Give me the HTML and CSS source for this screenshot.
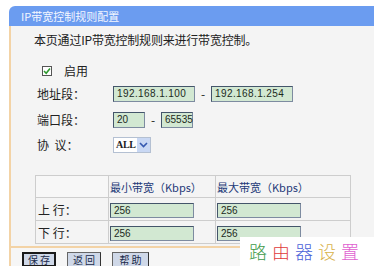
FILE: index.html
```html
<!DOCTYPE html>
<html lang="zh-CN">
<head>
	<meta charset="UTF-8">
	<title>IP带宽控制规则配置</title>
	<link rel="stylesheet" href="styles.css">
</head>
<body>
	<div class="panel">
		<div class="title">IP带宽控制规则配置</div>
		<div class="content">
			<p class="intro">本页通过IP带宽控制规则来进行带宽控制。</p>
			<div class="check-row">
				<span class="checkbox">
					<svg width="8" height="8" viewBox="0 0 8 8"><path d="M1 4 L3.2 6.2 L7 1.5" fill="none" stroke="#2f9a2f" stroke-width="1.6"/></svg>
				</span>
				<span class="check-label">启用</span>
			</div>
			<div class="row row-addr">
				<span class="label">地址段：</span>
				<span class="field ip">192.168.1.100</span>
				<span class="dash">-</span>
				<span class="field ip">192.168.1.254</span>
			</div>
			<div class="row row-port">
				<span class="label">端口段：</span>
				<span class="field port">20</span>
				<span class="dash">-</span>
				<span class="field port">65535</span>
			</div>
			<div class="row row-proto">
				<span class="label">协&nbsp; 议：</span>
				<span class="select">
					<span class="select-text">ALL</span>
					<span class="select-btn">
						<svg width="9" height="6" viewBox="0 0 9 6"><path d="M1 1 L4.5 4.5 L8 1" fill="none" stroke="#3559b0" stroke-width="1.6"/></svg>
					</span>
				</span>
			</div>
			<table class="bw">
				<tr class="head">
					<td class="c1"></td>
					<td class="c2">最小带宽（Kbps）</td>
					<td class="c3">最大带宽（Kbps）</td>
				</tr>
				<tr>
					<td class="c1">上 行：</td>
					<td class="c2"><span class="field bw-in">256</span></td>
					<td class="c3"><span class="field bw-in">256</span></td>
				</tr>
				<tr>
					<td class="c1">下 行：</td>
					<td class="c2"><span class="field bw-in">256</span></td>
					<td class="c3"><span class="field bw-in">256</span></td>
				</tr>
			</table>
		</div>
		<div class="footer">
			<span class="btn btn-default">保 存</span>
			<span class="btn">返 回</span>
			<span class="btn btn-help">帮 助</span>
		</div>
	</div>
	<div class="mark">
		<span class="m1">路</span><span class="m2">由</span><span class="m3">器</span><span class="m4">设</span><span class="m5">置</span>
	</div>
</body>
</html>
```

FILE: styles.css
```css
*{
	margin: 0;
	padding: 0;
	box-sizing: border-box;
}
body{
	background: #fff;
	font-family: "Noto Sans CJK SC", "Liberation Sans", sans-serif;
	font-size: 12px;
	color: #222;
	overflow: hidden;
	position: relative;
	height: 266px;
}
.panel{
	margin: 6px 0 0 9px;
}
.title{
	height: 20px;
	line-height: 20px;
	background: #6b9cf0;
	border-radius: 6px 0 0 0;
	color: #f4f7ff;
	font-size: 11px;
	padding-left: 12px;
}
.content{
	background: #f4f4f4;
	border-left: 2px solid #f3d3a6;
	border-bottom: 2px solid #f3d3a6;
	padding: 6px 0 2px 23px;
}
.intro{
	line-height: 16px;
	font-size: 12px;
	letter-spacing: -0.2px;
}
.check-row{
	display: flex;
	align-items: center;
	height: 17px;
	margin: 14px 0 0 8px;
}
.checkbox{
	width: 10px;
	height: 10px;
	border: 1px solid #555;
	background: #fff;
	display: flex;
	align-items: center;
	justify-content: center;
}
.check-label{
	margin-left: 12px;
}
.row{
	display: flex;
	align-items: center;
	height: 17px;
	padding-left: 3px;
}
.row-addr{ margin-top: 6px; }
.row-port{ margin-top: 9px; }
.row-proto{ margin-top: 8px; }
.label{
	width: 76px;
}
.field{
	display: inline-block;
	height: 16px;
	line-height: 14px;
	background: #d2e8d2;
	border: 1px solid #44556a;
	border-right-color: #7d8ba0;
	border-bottom-color: #7d8ba0;
	font-family: "Liberation Sans", sans-serif;
	font-size: 10px;
	color: #1c2a1c;
	padding-left: 3px;
}
.ip{
	width: 82px;
	letter-spacing: 0.4px;
}
.port{
	width: 32px;
}
.dash{
	width: 16px;
	text-align: center;
}
.select{
	display: flex;
	align-items: center;
	height: 16px;
	width: 38px;
	border: 1px solid #b4c0d2;
	background: #fff;
}
.select-text{
	font-family: "Liberation Serif", serif;
	font-weight: bold;
	font-size: 10px;
	letter-spacing: -0.3px;
	padding-left: 2px;
	width: 23px;
	overflow: hidden;
}
.select-btn{
	width: 13px;
	height: 14px;
	background: #c9d8f4;
	display: flex;
	align-items: center;
	justify-content: center;
}
.bw{
	margin: 22px 0 0 1px;
	width: 316px;
	border-collapse: collapse;
	table-layout: fixed;
}
.bw td{
	border: 1px solid #cdcdcd;
	height: 23px;
	padding: 0 0 0 1px;
	vertical-align: middle;
}
.bw .head td{
	height: 22px;
	color: #1e3a78;
	font-size: 11px;
}
.bw .c1{
	width: 73px;
	padding-left: 2px;
}
.bw .c2{
	width: 107px;
}
.bw .head .c1{
	background: #f7f7f7;
}
.bw-in{
	width: 84px;
	height: 15px;
	line-height: 13px;
	font-size: 10px;
}
.footer{
	border-left: 2px solid #f3d3a6;
	background: #f6f6f6;
	padding: 4px 0 0 11px;
	height: 30px;
	display: flex;
	align-items: flex-start;
}
.btn{
	width: 34px;
	height: 15px;
	line-height: 13px;
	text-align: center;
	background: #cfd8e8;
	border: 1px solid #666;
	border-right-color: #333;
	border-bottom-color: #333;
	font-size: 10px;
	color: #1a2a4a;
	margin-right: 11px;
}
.btn-default{
	border: 2px solid #1a1a1a;
	line-height: 11px;
}
.btn-help{
	width: 37px;
}
.mark{
	position: absolute;
	left: 240px;
	top: 237px;
	width: 134px;
	height: 29px;
	background: #fff;
	padding: 3px 0 0 9px;
	font-size: 18px;
	font-weight: 300;
	line-height: 22px;
	letter-spacing: 5px;
}
.m1{ color: #3e9a4a; }
.m2{ color: #e03a3a; }
.m3{ color: #4a62d8; }
.m4{ color: #d8b24a; }
.m5{ color: #e060d0; }
```
